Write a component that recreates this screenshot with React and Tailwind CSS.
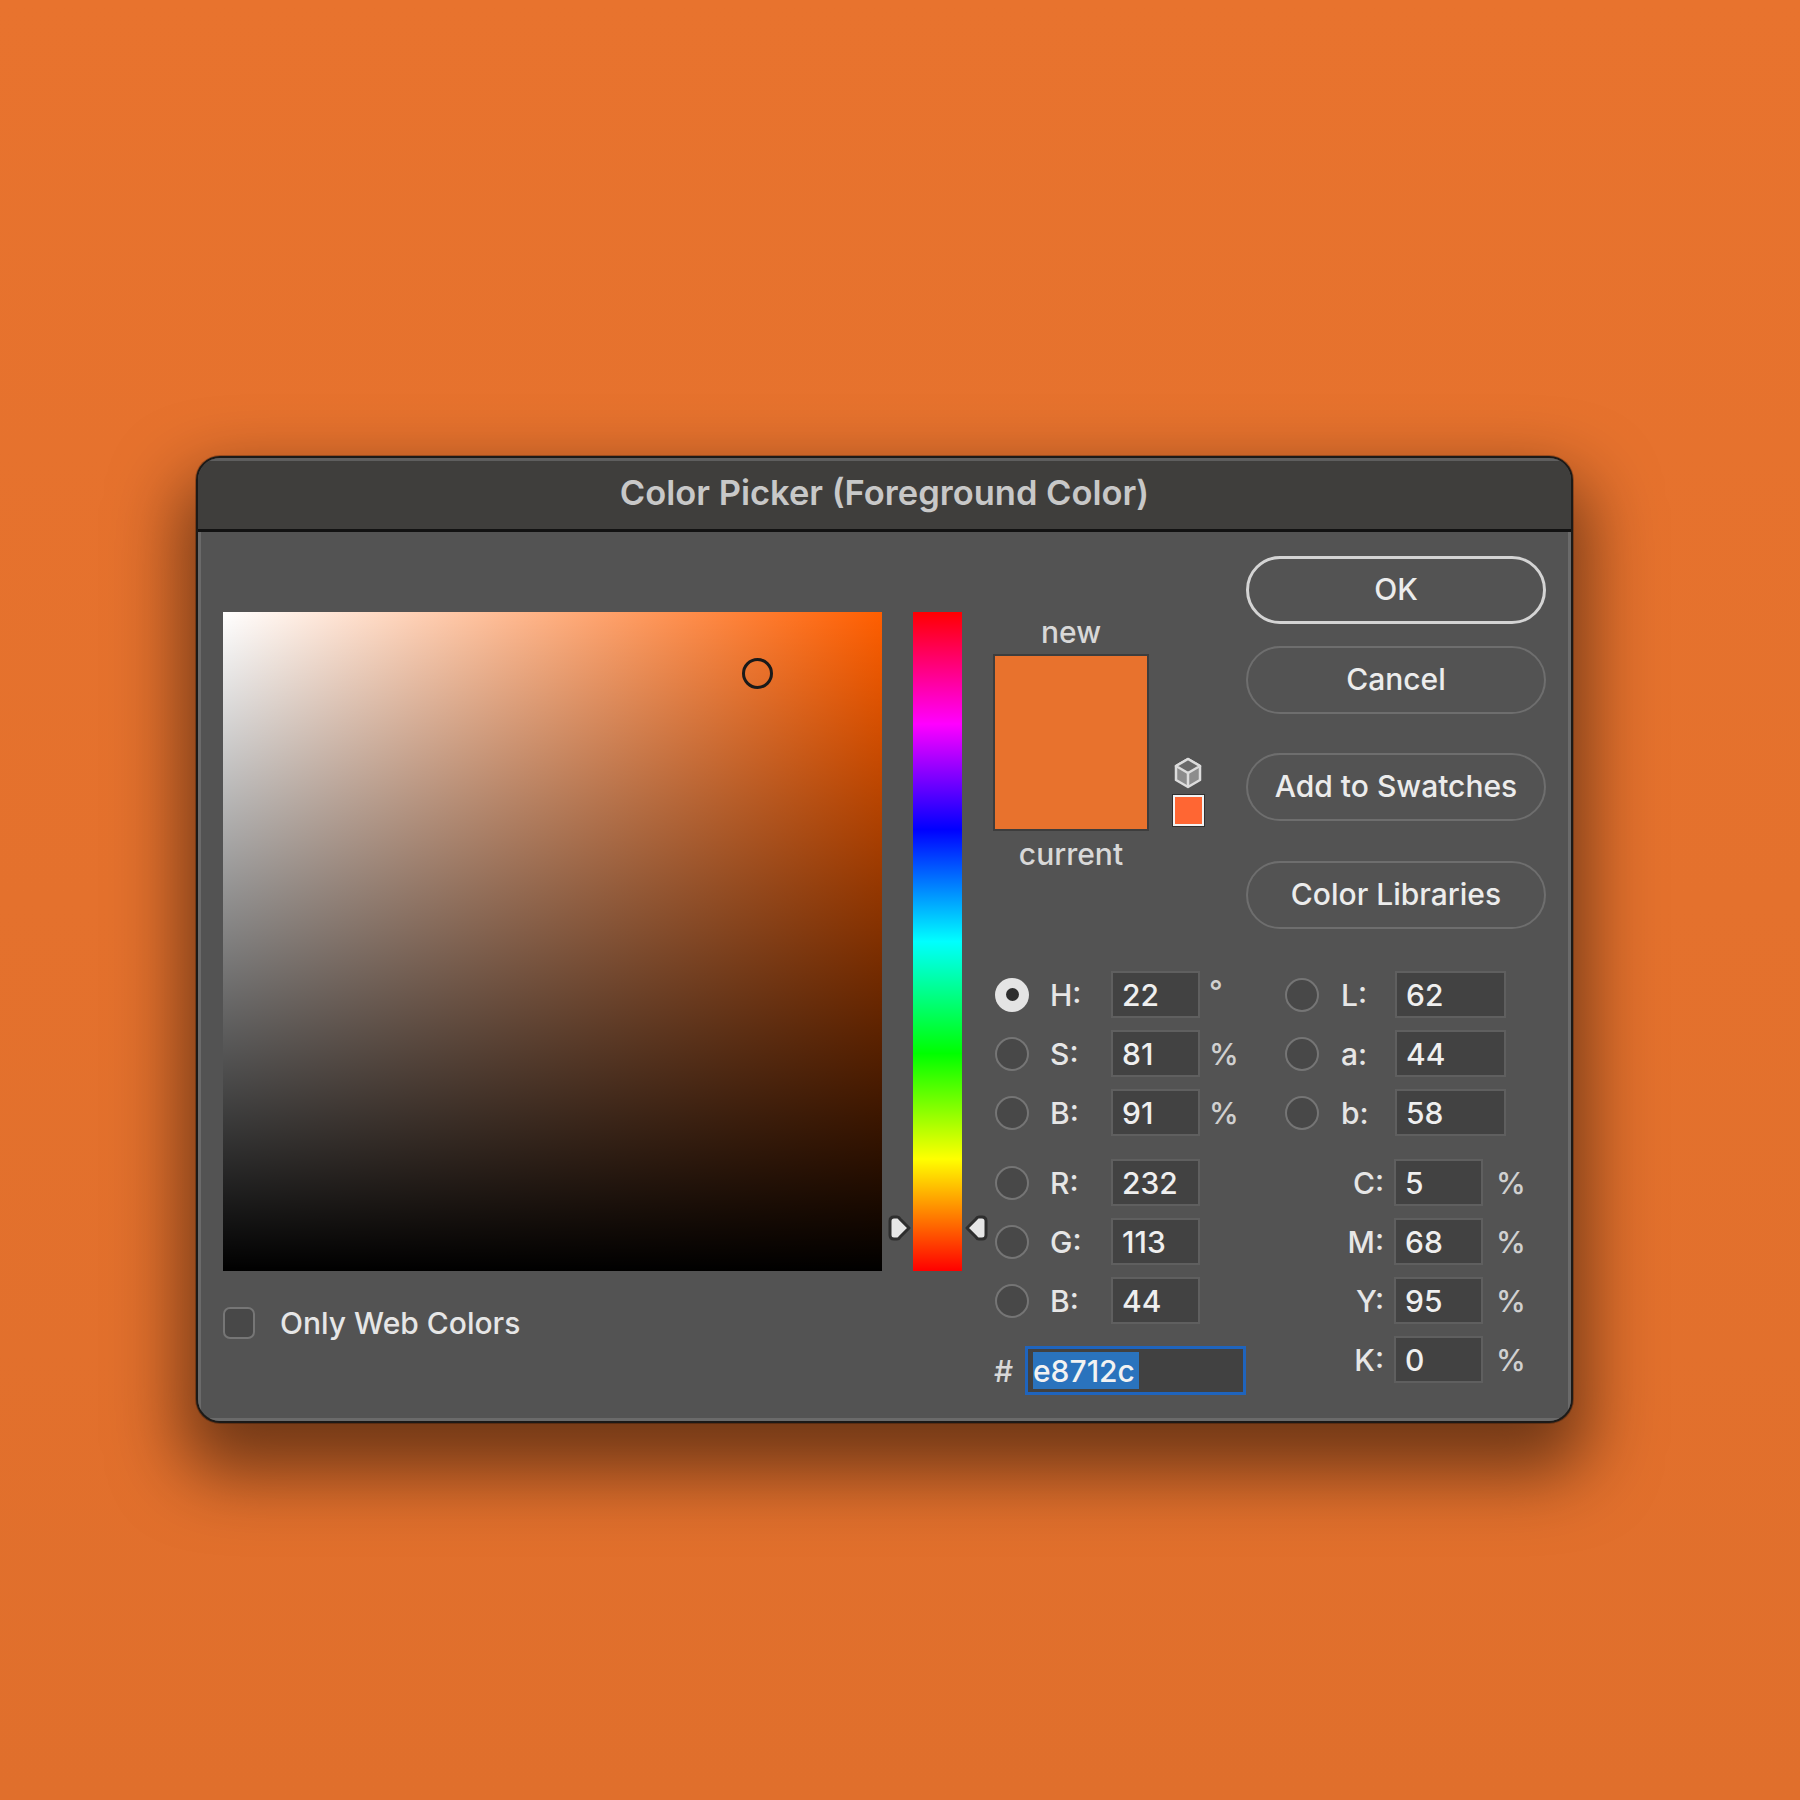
import { useState } from "react";

const FONT = "font-['Inter','Noto_Sans',sans-serif]";

const HSB_ROWS = [
  { label: "H:", value: "22", unit: "°", checked: true },
  { label: "S:", value: "81", unit: "%" },
  { label: "B:", value: "91", unit: "%" },
];
const RGB_ROWS = [
  { label: "R:", value: "232" },
  { label: "G:", value: "113" },
  { label: "B:", value: "44" },
];
const LAB_ROWS = [
  { label: "L:", value: "62" },
  { label: "a:", value: "44" },
  { label: "b:", value: "58" },
];
const CMYK_ROWS = [
  { label: "C:", value: "5" },
  { label: "M:", value: "68" },
  { label: "Y:", value: "95" },
  { label: "K:", value: "0" },
];

const Radio = ({ checked }) =>
  checked ? (
    <span className="flex h-[34px] w-[34px] shrink-0 items-center justify-center rounded-full bg-[#e4e4e4]">
      <span className="h-[13px] w-[13px] rounded-full bg-[#2e2e2e]" />
    </span>
  ) : (
    <span className="h-[34px] w-[34px] shrink-0 rounded-full border-2 border-[#757575] bg-[#484848]" />
  );

const Field = ({ value, width = "w-[89px]" }) => (
  <span className={`flex h-[47px] shrink-0 items-center border-2 border-[#5f5f5f] bg-[#424242] pl-[9px] text-[#efefef] ${width}`}>
    {value}
  </span>
);

const ValueRow = ({ label, value, unit, checked }) => (
  <div className="flex h-[47px] items-center">
    <span className="ml-[2px] flex w-[34px] shrink-0">
      <Radio checked={checked} />
    </span>
    <span className="ml-[21px] w-[61px] shrink-0">{label}</span>
    <Field value={value} />
    {unit && <span className={`ml-[9px] text-[#d0d0d0] ${unit === "°" ? "-mt-[8px]" : ""}`}>{unit}</span>}
  </div>
);

const LabRow = ({ label, value }) => (
  <div className="flex h-[47px] items-center">
    <Radio />
    <span className="ml-[22px] w-[54px] shrink-0">{label}</span>
    <Field value={value} width="w-[111px]" />
  </div>
);

const CmykRow = ({ label, value }) => (
  <div className="flex h-[47px] items-center">
    <span className="w-[109px] shrink-0 pr-[10px] text-right">{label}</span>
    <Field value={value} />
    <span className="ml-[13px] text-[#d0d0d0]">%</span>
  </div>
);

const PillButton = ({ children, primary, className = "" }) => (
  <button
    className={`flex h-[68px] w-[300px] items-center justify-center rounded-full pb-[2px] text-[#ececec] ${
      primary ? "border-[3px] border-[#d4d4d4]" : "border-2 border-[#6e6e6e]"
    } ${className}`}
  >
    {children}
  </button>
);

const CubeIcon = () => (
  <svg width="30" height="32" viewBox="0 0 30 32" className="block">
    <path d="M15 2 L27 9 V23 L15 30 L3 23 V9 Z" fill="#8c8c8c" stroke="#dcdcdc" strokeWidth="2.5" strokeLinejoin="round" />
    <path d="M15 2 L27 9 L15 16 L3 9 Z" fill="#6a6a6a" stroke="#dcdcdc" strokeWidth="2.5" strokeLinejoin="round" />
    <path d="M15 16 V30" stroke="#dcdcdc" strokeWidth="2.5" />
  </svg>
);

// Hue slider pointer: a rounded tab whose tip faces the strip
const HueMarker = ({ flip, className }) => (
  <svg width="24" height="28" viewBox="0 0 24 28" className={`${flip ? "-scale-x-100" : ""} ${className}`}>
    <path
      d="M3 7 Q3 3 7 3 H10 Q12 3 13 5 L22 14 L13 23 Q12 25 10 25 H7 Q3 25 3 21 Z"
      fill="#e6e6e6"
      stroke="#2e2e2e"
      strokeWidth="3"
      strokeLinejoin="round"
    />
  </svg>
);

const App = () => {
  const [webOnly, setWebOnly] = useState(false);

  return (
    <div className={`flex h-[1800px] w-[1800px] items-start bg-[linear-gradient(to_bottom,#e8732e,#e06f2c)] pl-[196px] pt-[456px] text-[30px] font-medium leading-none text-[#e6e6e6] ${FONT}`}>
      {/* Dialog window */}
      <div className="flex h-[967px] w-[1377px] flex-col overflow-hidden rounded-[24px] border-2 border-[#1c1a18] bg-[#535353] shadow-[0_0_0_1px_rgba(0,0,0,0.25),0_36px_70px_14px_rgba(0,0,0,0.5)]">
        <header className="flex h-[74px] shrink-0 items-center justify-center border-b-[3px] border-t-[3px] border-b-[#121212] border-t-[#5e5e5e] bg-[#3f3e3c] pb-[4px] text-[34.5px] font-semibold text-[#c8c8c8]">
          Color Picker (Foreground Color)
        </header>

        <div className="flex flex-1 border-b-[3px] border-l-[3px] border-r-[3px] border-[#6a6a6a] pl-[22px]">
          {/* Saturation / brightness square */}
          <div className="w-[659px] shrink-0 pt-[80px]">
            <div className="relative h-[659px] w-[659px] bg-[linear-gradient(to_top,#000,transparent),linear-gradient(to_right,#fff,#ff5e00)]">
              <span className="absolute left-[519px] top-[46px] h-[31px] w-[31px] rounded-full border-[3px] border-[#1a1a1a]" />
            </div>
            <label className="mt-[36px] flex items-center">
              <button
                onClick={() => setWebOnly(!webOnly)}
                className="h-[32px] w-[32px] rounded-[7px] border-2 border-[#767676] bg-[#484848]"
              />
              <span className="ml-[25px]">Only Web Colors</span>
            </label>
          </div>

          {/* Hue strip */}
          <div className="relative ml-[31px] mt-[80px] h-[659px] w-[49px] shrink-0 bg-[linear-gradient(to_bottom,#f00,#f0f_17%,#00f_33%,#0ff_50%,#0f0_67%,#ff0_83%,#f00)]">
            <HueMarker className="absolute -left-[26px] top-[602px]" />
            <HueMarker flip className="absolute -right-[27px] top-[602px]" />
          </div>

          <div className="ml-[31px] flex flex-col">
            <div className="flex pt-[24px]">
              {/* New / current preview */}
              <div className="flex w-[253px] shrink-0">
                <div className="w-[156px] pt-[61px] text-center text-[#d8d8d8]">
                  <div className="flex h-[30px] items-center justify-center">new</div>
                  <div className="mt-[7px] h-[177px] border-2 border-[#3d3d3d] bg-[#e8722d]" />
                  <div className="mt-[8px] flex h-[30px] items-center justify-center">current</div>
                </div>
                <div className="ml-[23px] flex h-[271px] flex-col items-start justify-end">
                  <span className="ml-px">
                    <CubeIcon />
                  </span>
                  <span className="mt-[5px] block h-[33px] w-[33px] border border-[#303030] bg-[#ff6633] shadow-[inset_0_0_0_2px_#f2f2f2]" />
                </div>
              </div>

              <div className="flex flex-col">
                <PillButton primary>OK</PillButton>
                <PillButton className="mt-[22px]">Cancel</PillButton>
                <PillButton className="mt-[39px]">Add to Swatches</PillButton>
                <PillButton className="mt-[40px]">Color Libraries</PillButton>
              </div>
            </div>

            {/* Numeric colour values */}
            <div className="mt-[42px] flex">
              <div className="w-[292px] shrink-0">
                <div className="flex flex-col gap-[12px]">
                  {HSB_ROWS.map((row) => (
                    <ValueRow key={row.label} {...row} />
                  ))}
                </div>
                <div className="mt-[23px] flex flex-col gap-[12px]">
                  {RGB_ROWS.map((row) => (
                    <ValueRow key={row.label} {...row} />
                  ))}
                </div>
                <div className="mt-[22px] flex h-[49px] items-center">
                  <span className="ml-px w-[31px] shrink-0 text-[#d8d8d8]">#</span>
                  <span className="flex h-[49px] w-[221px] items-center border-[3px] border-[#1f64bd] bg-[#414141] pl-[5px]">
                    <span className="flex h-[37px] items-center bg-[#2a73bd] pr-[4px] text-[#f2f2f2]">e8712c</span>
                  </span>
                </div>
              </div>
              <div>
                <div className="flex flex-col gap-[12px]">
                  {LAB_ROWS.map((row) => (
                    <LabRow key={row.label} {...row} />
                  ))}
                </div>
                <div className="mt-[23px] flex flex-col gap-[12px]">
                  {CMYK_ROWS.map((row) => (
                    <CmykRow key={row.label} {...row} />
                  ))}
                </div>
              </div>
            </div>
          </div>
        </div>
      </div>
    </div>
  );
};

export default App;
